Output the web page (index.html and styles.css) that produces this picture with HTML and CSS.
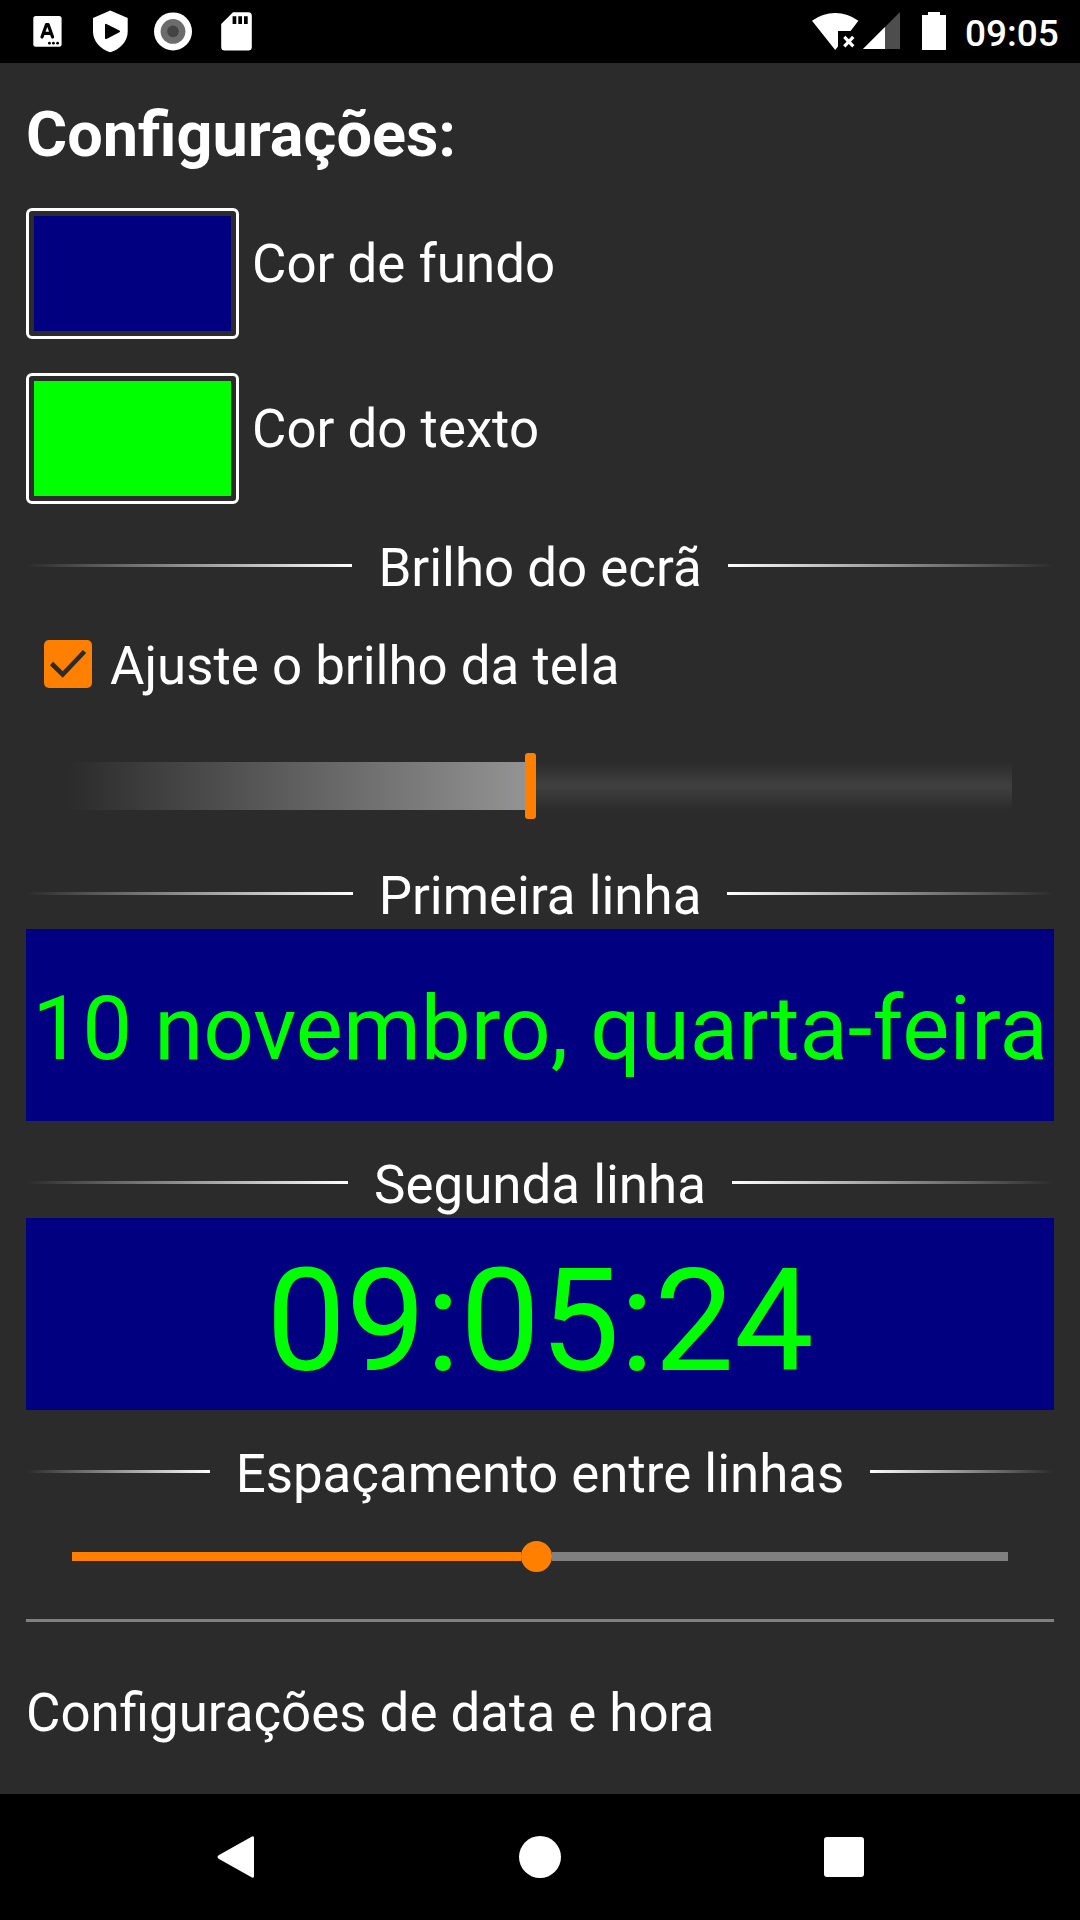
FILE: index.html
```
<!DOCTYPE html>
<html lang="pt">
<head>
  <meta charset="utf-8">
  <meta name="viewport" content="width=device-width, initial-scale=1">
  <title>Configurações</title>

  <link rel="stylesheet" href="styles.css">

</head>
<body>
  <header class="status-bar">
    <div class="status-left">
      <svg width="29" height="63" viewBox="33 0 29 63">
        <rect x="33.3" y="16" width="28.3" height="30.8" rx="2.5" fill="#fff"/>
        <path d="M42 37L46.4 24.7H48.2L52.6 37M43.6 33.4H51" fill="none" stroke="#000" stroke-width="3.2" stroke-linecap="round" stroke-linejoin="round"/>
        <circle cx="49.4" cy="43.2" r="1.4"/><circle cx="53.4" cy="43.2" r="1.4"/><circle cx="57.6" cy="43.2" r="1.4"/>
      </svg>
      <svg width="35" height="63" viewBox="93 0 35 63">
        <path d="M110.3 10.6L127.7 18V32C127.7 41 120 49.5 110.3 52.3C100.7 49.5 93 41 93 32V18Z" fill="#fff"/>
        <path d="M106 24.8L119 31.4L106 38Z" stroke="#000" stroke-width="2" stroke-linejoin="round"/>
      </svg>
      <svg width="38" height="63" viewBox="154.3 0 38 63">
        <circle cx="173.3" cy="31.4" r="19" fill="#fff"/>
        <circle cx="173.3" cy="31.4" r="12.4" fill="#6c6c6c"/>
        <circle cx="173.3" cy="31.4" r="5.8" fill="#444"/>
      </svg>
      <svg width="31" height="63" viewBox="221 0 31 63">
        <path d="M233 12.3H248.3Q251.8 12.3 251.8 15.8V47Q251.8 50.5 248.3 50.5H224.7Q221.2 50.5 221.2 47V24Z" fill="#fff"/>
        <path d="M232.6 16.3H236.3V24H232.6ZM238.3 16.3H242V24H238.3ZM244 16.3H247.7V24H244Z"/>
      </svg>
    </div>
    <div class="status-right">
      <svg width="47" height="63" viewBox="812 0 47 63">
        <path d="M812 20.8Q822.5 13 835.2 13T858.4 20.8L850.6 31H838V46.5L835.2 50Z" fill="#fff"/>
        <path d="M844.3 36.8L853.3 46.3M853.3 36.8L844.3 46.3" stroke="#fff" stroke-width="3.2"/>
      </svg>
      <svg width="37" height="63" viewBox="863 0 37 63">
        <path d="M863 49L900 12V49Z" fill="#4d4d4d"/>
        <path d="M863 49L885 27V49Z" fill="#fff"/>
      </svg>
      <svg width="24" height="63" viewBox="922 0 24 63">
        <path d="M928 12H940V15H946V50H922V15H928Z" fill="#fff"/>
      </svg>
      <span class="status-time">09:05</span>
    </div>
  </header>

  <main class="settings">
    <h1>Configurações:</h1>

    <div class="color-row">
      <div class="swatch"><div class="swatch-fill background"></div></div>
      <span>Cor de fundo</span>
    </div>
    <div class="color-row">
      <div class="swatch"><div class="swatch-fill text"></div></div>
      <span>Cor do texto</span>
    </div>

    <h2 class="section">Brilho do ecrã</h2>
    <div class="check-row">
      <svg class="checkbox" width="48" height="48" viewBox="0 0 48 48">
        <rect width="48" height="48" rx="5" fill="#ff8000"/>
        <path d="M7.5 23.5L18.7 34.5L40.5 11.5" fill="none" stroke="#2b2b2b" stroke-width="4.6"/>
      </svg>
      <span>Ajuste o brilho da tela</span>
    </div>
    <div class="brightness">
      <div class="brightness-on"></div>
      <div class="brightness-thumb"></div>
      <div class="brightness-off"></div>
    </div>

    <h2 class="section first-line">Primeira linha</h2>
    <div class="preview date">10 novembro, quarta-feira</div>

    <h2 class="section">Segunda linha</h2>
    <div class="preview time">09:05:24</div>

    <h2 class="section">Espaçamento entre linhas</h2>
    <div class="spacing">
      <div class="spacing-on"></div>
      <div class="spacing-thumb"></div>
      <div class="spacing-off"></div>
    </div>

    <hr>
    <div class="date-settings">Configurações de data e hora</div>
  </main>

  <nav class="nav-bar">
    <svg width="39" height="42" viewBox="0 0 39 42"><path d="M35 .5Q37 -.5 37 2V40Q37 42.5 35 41.5L2 23Q-1 21 2 19Z" fill="#fff"/></svg>
    <svg width="42" height="42" viewBox="0 0 42 42"><circle cx="21" cy="21" r="21" fill="#fff"/></svg>
    <svg width="40" height="42" viewBox="0 0 40 42"><rect y="1" width="40" height="40" rx="3" fill="#fff"/></svg>
  </nav>
</body>
</html>
```

FILE: styles.css
```
* {
  margin: 0;
  padding: 0;
  box-sizing: border-box;
}

body {
  height: 1920px;
  display: flex;
  flex-direction: column;
  overflow: hidden;
  background-color: #2b2b2b;
  color: #fff;
  font-family: Roboto, "Liberation Sans", sans-serif;
  font-size: 52.85px;
  line-height: 62px;
  white-space: nowrap;
}
svg {
  display: block;
  flex: none;
}

/* status bar */
.status-bar {
  height: 63px;
  padding: 0 21px 0 33px;
  display: flex;
  justify-content: space-between;
  background-color: #000;
}
.status-left,
.status-right {
  display: flex;
}
.status-left {
  gap: 29px;
}
.status-left svg:nth-child(1) {
  margin-right: 2px;
}
.status-left svg:nth-child(3) {
  margin-left: -3px;
}
.status-right svg:nth-child(1) {
  margin-right: 4px;
}
.status-right svg:nth-child(2) {
  margin-right: 22px;
}
.status-time {
  width: 113px;
  padding-left: 19px;
  font-size: 37px;
  font-weight: 500;
  line-height: 67px;
}

/* settings */
.settings {
  flex: 1;
  padding: 35px 26px 0;
}
h1 {
  margin-bottom: 36px;
  font-size: 63px;
  line-height: 74px;
}
.color-row {
  height: 131px;
  display: flex;
}
.color-row + .color-row {
  margin-top: 34px;
}
.color-row span {
  padding: 25px 0 0 13px;
}
.swatch {
  width: 213px;
  padding: 5px;
  border: 3px solid #fff;
  border-radius: 6px;
}
.swatch-fill {
  height: 115px;
}
.swatch-fill.background {
  background-color: #000080;
}
.swatch-fill.text {
  background-color: #00ff00;
}

.section {
  margin-top: 33px;
  display: flex;
  align-items: center;
  gap: 26px;
  font-size: 52.85px;
  font-weight: normal;
}
.section::before,
.section::after {
  content: "";
  flex: 1;
  height: 3px;
  margin-bottom: 5px;
  background: linear-gradient(to right, transparent, #fff);
}
.section::after {
  background: linear-gradient(to left, transparent, #fff);
}
.section.first-line {
  margin-top: 46px;
}

.check-row {
  margin-top: 36px;
  padding-left: 18px;
  display: flex;
  align-items: center;
  gap: 18px;
}
.checkbox {
  margin-bottom: 4px;
}

.brightness {
  height: 66px;
  margin: 56px 42px 0;
  display: flex;
  align-items: center;
}
.brightness-on {
  width: 457px;
  height: 48px;
  background: linear-gradient(to right, #2b2b2b, #939393);
}
.brightness-thumb {
  width: 11px;
  height: 66px;
  border-radius: 3px;
  background-color: #ff8000;
}
.brightness-off {
  flex: 1;
  height: 48px;
  background: linear-gradient(#2b2b2b, #404040, #2b2b2b);
}

.preview {
  height: 192px;
  margin-top: 2px;
  display: flex;
  align-items: center;
  justify-content: center;
  background-color: #000080;
  color: #00ff00;
}
.preview.date {
  padding-top: 8px;
  font-size: 88.9px;
}
.preview.time {
  padding-top: 16px;
  font-size: 142px;
}

.spacing {
  height: 31px;
  margin: 36px 46px 0;
  display: flex;
  align-items: center;
}
.spacing-on {
  width: 449px;
  height: 9px;
  background-color: #ff8000;
}
.spacing-thumb {
  width: 31px;
  height: 31px;
  border-radius: 50%;
  background-color: #ff8000;
}
.spacing-off {
  flex: 1;
  height: 9px;
  background-color: #808080;
}

hr {
  height: 3px;
  margin: 47px 0 60px;
  border: none;
  background-color: #808080;
}

/* navigation bar */
.nav-bar {
  height: 126px;
  padding: 0 216px 0 217px;
  display: flex;
  align-items: center;
  justify-content: space-between;
  background-color: #000;
}
```
